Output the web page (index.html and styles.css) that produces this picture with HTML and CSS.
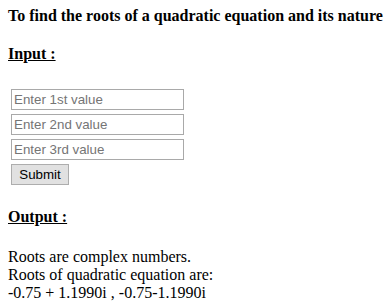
FILE: index.html
```html
<!DOCTYPE html>
<html>
<head>
<meta charset="utf-8">
<link rel="stylesheet" href="styles.css">
</head>
<body>
<div class="page">
  <div class="title">To find the roots of a quadratic equation and its nature</div>
  <div class="heading heading-input">Input :</div>
  <form class="form">
    <input class="field" type="text" placeholder="Enter 1st value">
    <input class="field" type="text" placeholder="Enter 2nd value">
    <input class="field" type="text" placeholder="Enter 3rd value">
    <button class="submit" type="button">Submit</button>
  </form>
  <div class="heading heading-output">Output :</div>
  <div class="result">
    <div class="line">Roots are complex numbers.</div>
    <div class="line">Roots of quadratic equation are:</div>
    <div class="line">-0.75 + 1.1990i , -0.75-1.1990i</div>
  </div>
</div>
</body>
</html>
```

FILE: styles.css
```css
html, body {
  margin: 0;
  padding: 0;
  background: #ffffff;
}

.page {
  padding: 7px 8px 0 8px;
  font-family: "Liberation Serif", "Times New Roman", serif;
  font-size: 16px;
  line-height: 18px;
  color: #000000;
}

.title {
  font-weight: bold;
  white-space: nowrap;
}

.heading {
  font-weight: bold;
  text-decoration: underline;
}

.heading-input {
  margin-top: 20px;
}

.form {
  margin: 26px 0 0 0;
  padding-left: 3px;
  display: flex;
  flex-direction: column;
  align-items: flex-start;
  gap: 4px;
}

.field {
  box-sizing: border-box;
  width: 173px;
  height: 21px;
  margin: 0;
  padding: 1px 2px;
  border: 1px solid #a9a9a9;
  font-family: "Liberation Sans", Arial, sans-serif;
  font-size: 13.333px;
  color: #000000;
  background: #ffffff;
  outline: none;
}

.field::placeholder {
  color: #757575;
}

.submit {
  box-sizing: border-box;
  width: 58px;
  height: 21px;
  margin: 0;
  padding: 1px 6px;
  border: 1px solid #adadad;
  border-radius: 0;
  background: #e1e1e1;
  font-family: "Liberation Sans", Arial, sans-serif;
  font-size: 13.333px;
  color: #000000;
}

.heading-output {
  margin-top: 23px;
}

.result {
  margin-top: 22px;
}
```
